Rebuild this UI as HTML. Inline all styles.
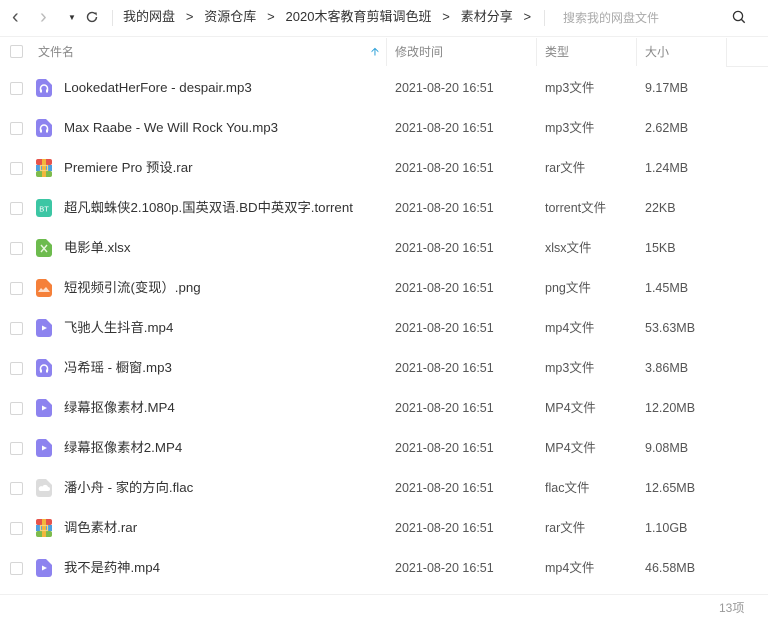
<!DOCTYPE html>
<html><head><meta charset="utf-8"><style>
*{margin:0;padding:0;box-sizing:border-box}
body{width:768px;height:624px;background:#fff;font-family:"Liberation Sans","Noto Sans CJK SC",sans-serif;color:#333;position:relative;overflow:hidden;font-size:12.5px}
.a{position:absolute;white-space:nowrap;line-height:16px}
.cb{position:absolute;left:10px;width:13px;height:13px;border:1px solid #d6d6d6;border-radius:2px;background:#fff}
.ic{position:absolute;left:36px;width:16px;height:18px}
.n{left:64px;color:#333;font-size:13.3px}
.t{left:395px;color:#555}
.y{left:545px;color:#555}
.s{left:645px;color:#555}
.hd{color:#888;font-size:12px}
.sep{position:absolute;top:38px;width:1px;height:28px;background:#eee}
</style></head><body>
<div class="a" style="left:12px;top:9px;font-size:20px;color:#555">&#8249;</div>
<div class="a" style="left:40px;top:9px;font-size:20px;color:#bbb">&#8250;</div>
<div class="a" style="left:68px;top:10px;font-size:8px;color:#333">&#9660;</div>
<svg class="a" style="left:85px;top:10px" width="14" height="14" viewBox="0 0 14 14"><path d="M11.5 7a4.5 4.5 0 1 1-1.4-3.3" fill="none" stroke="#444" stroke-width="1.4"/><path d="M8.5 2.5h3.2v3.2z" fill="#444"/></svg>
<div style="position:absolute;left:112px;top:10px;width:1px;height:16px;background:#e5e5e5"></div>
<div class="a" style="left:123px;top:9px;font-size:13px;color:#333">我的网盘&nbsp;&nbsp;&nbsp;&gt;&nbsp;&nbsp;&nbsp;资源仓库&nbsp;&nbsp;&nbsp;&gt;&nbsp;&nbsp;&nbsp;2020木客教育剪辑调色班&nbsp;&nbsp;&nbsp;&gt;&nbsp;&nbsp;&nbsp;素材分享&nbsp;&nbsp;&nbsp;&gt;</div>
<div style="position:absolute;left:544px;top:10px;width:1px;height:16px;background:#e5e5e5"></div>
<div class="a" style="left:563px;top:10px;font-size:12px;color:#aaa">搜索我的网盘文件</div>
<svg class="a" style="left:732px;top:10px" width="14" height="14" viewBox="0 0 14 14"><circle cx="6" cy="6" r="4.6" fill="none" stroke="#333" stroke-width="1.3"/><path d="M9.4 9.4l3.3 3.3" stroke="#333" stroke-width="1.4"/></svg>
<div style="position:absolute;left:0;top:36px;width:768px;height:1px;background:#f0f0f0"></div>
<div class="cb" style="top:45px"></div>
<div class="a hd" style="left:38px;top:44px">文件名</div>
<div class="a" style="left:371px;top:44px;color:#2a9fd8;font-size:11px">&#129129;</div>
<div class="sep" style="left:386px"></div><div class="sep" style="left:536px"></div><div class="sep" style="left:636px"></div><div class="sep" style="left:726px"></div>
<div style="position:absolute;left:726px;top:66px;width:42px;height:1px;background:#eee"></div>
<div class="a hd" style="left:395px;top:44px">修改时间</div>
<div class="a hd" style="left:545px;top:44px">类型</div>
<div class="a hd" style="left:645px;top:44px">大小</div>

<svg width="0" height="0" style="position:absolute"><defs>
<g id="au"><path d="M0 3a3 3 0 0 1 3-3h7l6 6v9a3 3 0 0 1-3 3H3a3 3 0 0 1-3-3z" fill="#8d83ef"/><path d="M4.5 12V9.5a3.5 3.5 0 0 1 7 0V12" fill="none" stroke="#fff" stroke-width="1.5"/><rect x="4" y="10.5" width="2" height="3" fill="#fff"/><rect x="10" y="10.5" width="2" height="3" fill="#fff"/></g>
<g id="vi"><path d="M0 3a3 3 0 0 1 3-3h7l6 6v9a3 3 0 0 1-3 3H3a3 3 0 0 1-3-3z" fill="#8d83ef"/><path d="M6 6.5l5 2.5-5 2.5z" fill="#fff"/></g>
<g id="rar"><rect width="16" height="6" y="0" fill="#e5534b" rx="2"/><rect width="16" height="6" y="6" fill="#4c9fe0"/><rect width="16" height="6" y="12" fill="#7dbb4c" rx="2"/><rect x="6" width="4" height="18" fill="#f2b73c"/><rect x="4.5" y="6.5" width="7" height="5" fill="none" stroke="#f5d37a" stroke-width="1.2"/></g>
</defs></svg>

<div class="cb" style="top:82px"></div><svg class="ic" style="top:79px"><use href="#au"/></svg><div class="a n" style="top:80px">LookedatHerFore - despair.mp3</div><div class="a t" style="top:80px">2021-08-20 16:51</div><div class="a y" style="top:80px">mp3文件</div><div class="a s" style="top:80px">9.17MB</div>
<div class="cb" style="top:122px"></div><svg class="ic" style="top:119px"><use href="#au"/></svg><div class="a n" style="top:120px">Max Raabe - We Will Rock You.mp3</div><div class="a t" style="top:120px">2021-08-20 16:51</div><div class="a y" style="top:120px">mp3文件</div><div class="a s" style="top:120px">2.62MB</div>
<div class="cb" style="top:162px"></div><svg class="ic" style="top:159px"><use href="#rar"/></svg><div class="a n" style="top:160px">Premiere Pro 预设.rar</div><div class="a t" style="top:160px">2021-08-20 16:51</div><div class="a y" style="top:160px">rar文件</div><div class="a s" style="top:160px">1.24MB</div>
<div class="cb" style="top:202px"></div><svg class="ic" style="top:199px"><rect width="16" height="18" rx="3" fill="#3cc6a4"/><text x="8" y="12.5" font-size="7.5" fill="#fff" text-anchor="middle" font-family="Liberation Sans">BT</text></svg><div class="a n" style="top:200px">超凡蜘蛛侠2.1080p.国英双语.BD中英双字.torrent</div><div class="a t" style="top:200px">2021-08-20 16:51</div><div class="a y" style="top:200px">torrent文件</div><div class="a s" style="top:200px">22KB</div>
<div class="cb" style="top:242px"></div><svg class="ic" style="top:239px"><path d="M0 3a3 3 0 0 1 3-3h7l6 6v9a3 3 0 0 1-3 3H3a3 3 0 0 1-3-3z" fill="#6dbb4e"/><path d="M5 6l6 7M11 6l-6 7" stroke="#e8f6dd" stroke-width="1.4"/></svg><div class="a n" style="top:240px">电影单.xlsx</div><div class="a t" style="top:240px">2021-08-20 16:51</div><div class="a y" style="top:240px">xlsx文件</div><div class="a s" style="top:240px">15KB</div>
<div class="cb" style="top:282px"></div><svg class="ic" style="top:279px"><path d="M0 3a3 3 0 0 1 3-3h7l6 6v9a3 3 0 0 1-3 3H3a3 3 0 0 1-3-3z" fill="#f5803a"/><path d="M2 13l3-4 2 2 3-3 4 5z" fill="#fde0cc"/></svg><div class="a n" style="top:280px">短视频引流(变现）.png</div><div class="a t" style="top:280px">2021-08-20 16:51</div><div class="a y" style="top:280px">png文件</div><div class="a s" style="top:280px">1.45MB</div>
<div class="cb" style="top:322px"></div><svg class="ic" style="top:319px"><use href="#vi"/></svg><div class="a n" style="top:320px">飞驰人生抖音.mp4</div><div class="a t" style="top:320px">2021-08-20 16:51</div><div class="a y" style="top:320px">mp4文件</div><div class="a s" style="top:320px">53.63MB</div>
<div class="cb" style="top:362px"></div><svg class="ic" style="top:359px"><use href="#au"/></svg><div class="a n" style="top:360px">冯希瑶 - 橱窗.mp3</div><div class="a t" style="top:360px">2021-08-20 16:51</div><div class="a y" style="top:360px">mp3文件</div><div class="a s" style="top:360px">3.86MB</div>
<div class="cb" style="top:402px"></div><svg class="ic" style="top:399px"><use href="#vi"/></svg><div class="a n" style="top:400px">绿幕抠像素材.MP4</div><div class="a t" style="top:400px">2021-08-20 16:51</div><div class="a y" style="top:400px">MP4文件</div><div class="a s" style="top:400px">12.20MB</div>
<div class="cb" style="top:442px"></div><svg class="ic" style="top:439px"><use href="#vi"/></svg><div class="a n" style="top:440px">绿幕抠像素材2.MP4</div><div class="a t" style="top:440px">2021-08-20 16:51</div><div class="a y" style="top:440px">MP4文件</div><div class="a s" style="top:440px">9.08MB</div>
<div class="cb" style="top:482px"></div><svg class="ic" style="top:479px"><path d="M0 3a3 3 0 0 1 3-3h7l6 6v9a3 3 0 0 1-3 3H3a3 3 0 0 1-3-3z" fill="#dcdcdc"/><path d="M4 12h8a2 2 0 0 0 0-4 3 3 0 0 0-5.5-.5A2.2 2.2 0 0 0 4 12z" fill="#fff"/></svg><div class="a n" style="top:480px">潘小舟 - 家的方向.flac</div><div class="a t" style="top:480px">2021-08-20 16:51</div><div class="a y" style="top:480px">flac文件</div><div class="a s" style="top:480px">12.65MB</div>
<div class="cb" style="top:522px"></div><svg class="ic" style="top:519px"><use href="#rar"/></svg><div class="a n" style="top:520px">调色素材.rar</div><div class="a t" style="top:520px">2021-08-20 16:51</div><div class="a y" style="top:520px">rar文件</div><div class="a s" style="top:520px">1.10GB</div>
<div class="cb" style="top:562px"></div><svg class="ic" style="top:559px"><use href="#vi"/></svg><div class="a n" style="top:560px">我不是药神.mp4</div><div class="a t" style="top:560px">2021-08-20 16:51</div><div class="a y" style="top:560px">mp4文件</div><div class="a s" style="top:560px">46.58MB</div>
<div style="position:absolute;left:0;top:594px;width:768px;height:1px;background:#f0f0f0"></div>
<div class="a" style="left:719px;top:600px;font-size:12px;color:#999">13项</div>
</body></html>
